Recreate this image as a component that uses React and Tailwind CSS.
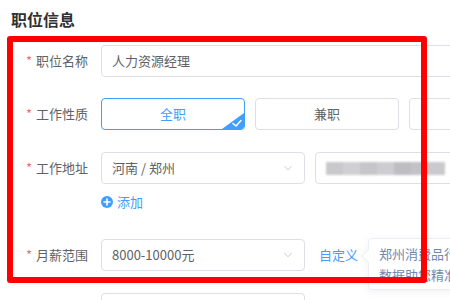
import { ChevronDown } from 'lucide-react';

const FONT = { fontFamily: '"Noto Sans CJK SC", "Noto Sans", sans-serif' };

function Label({ children }) {
  return (
    <div className="w-[90px] shrink-0 pr-[13px] text-right text-[13px] leading-8 text-[#606266]">
      <span className="mr-1 text-[#f56c6c]">*</span>
      {children}
    </div>
  );
}

function Select({ value }) {
  return (
    <div className="flex h-8 w-[204px] shrink-0 items-center justify-between rounded border border-[#dcdfe6] bg-white pl-[10px] pr-[9px] text-[13px] text-[#606266]">
      <span>{value}</span>
      <ChevronDown size={14} strokeWidth={1.5} className="text-[#c0c4cc]" />
    </div>
  );
}

function Blurred() {
  // masked address text
  const shades = ['#c9c9cd', '#d0d0d4', '#c6c6ca', '#cdcdd1', '#bdbdc2', '#c3c3c7', '#cacace'];
  return (
    <div className="flex h-[13px] blur-[1px]">
      {shades.map((c, i) => (
        <div key={i} className="h-full w-[17px]" style={{ background: c }} />
      ))}
    </div>
  );
}

export default function App() {
  return (
    <div className="relative h-[300px] w-[450px] overflow-hidden bg-white" style={FONT}>
      <div className="w-[700px] pl-[11px] pt-[9px]">
        <h2 className="text-[16px] font-bold leading-5 text-[#303133]">职位信息</h2>

        <div className="mt-[16px] flex flex-col">
          <div className="flex items-center">
            <Label>职位名称</Label>
            <div className="flex h-8 w-[460px] shrink-0 items-center rounded border border-[#dcdfe6] pl-[10px] text-[13px] text-[#606266]">
              人力资源经理
            </div>
          </div>

          <div className="mt-[21px] flex items-center">
            <Label>工作性质</Label>
            <div className="flex shrink-0 gap-[10px]">
              <div className="relative flex h-8 w-[144px] shrink-0 items-center justify-center overflow-hidden rounded border border-[#409eff] text-[13px] text-[#409eff]">
                全职
                <svg className="absolute bottom-0 right-0" width="22" height="16" viewBox="0 0 22 16">
                  <polygon points="22,0 22,16 0,16" fill="#409eff" />
                  <path d="M11 10.5 L14 13 L19 7.5" fill="none" stroke="#fff" strokeWidth="1.6" strokeLinecap="round" strokeLinejoin="round" />
                </svg>
              </div>
              <div className="flex h-8 w-[144px] shrink-0 items-center justify-center rounded border border-[#dcdfe6] text-[13px] text-[#606266]">
                兼职
              </div>
              <div className="flex h-8 w-[144px] shrink-0 items-center justify-center rounded border border-[#dcdfe6] text-[13px] text-[#606266]">
                实习
              </div>
            </div>
          </div>

          <div className="mt-[22px] flex items-center">
            <Label>工作地址</Label>
            <Select value="河南 / 郑州" />
            <div className="ml-[10px] flex h-8 w-[240px] shrink-0 items-center rounded border border-[#dcdfe6] pl-[10px]">
              <Blurred />
            </div>
          </div>

          <div className="flex h-9 items-center pl-[90px] text-[13px] text-[#409eff]">
            <svg width="12" height="12" viewBox="0 0 12 12" className="mr-[4px]">
              <circle cx="6" cy="6" r="6" fill="#409eff" />
              <path d="M6 3 V9 M3 6 H9" stroke="#fff" strokeWidth="1.6" strokeLinecap="round" />
            </svg>
            添加
          </div>

          <div className="mt-[19px] flex h-8 items-start">
            <Label>月薪范围</Label>
            <Select value="8000-10000元" />
            <span className="ml-[14px] shrink-0 whitespace-nowrap text-[13px] leading-8 text-[#409eff]">自定义</span>
            <div className="relative ml-[10px] -mt-px w-[200px] shrink-0 rounded border border-[#ebeef5] bg-white px-[10px] py-[4px] text-[13px] leading-[21px] text-[#7088b0] shadow-[0_2px_8px_rgba(0,0,0,0.06)]">
              <div className="absolute -left-[6px] top-[12px] h-[10px] w-[10px] rotate-45 border-b border-l border-[#ebeef5] bg-white" />
              <div className="whitespace-nowrap">郑州消费品行业月薪参考</div>
              <div className="whitespace-nowrap">数据助您精准定薪</div>
            </div>
          </div>

          <div className="mt-[22px] flex items-center">
            <div className="w-[90px] shrink-0" />
            <div className="h-8 w-[204px] shrink-0 rounded border border-[#dcdfe6]" />
          </div>
        </div>
      </div>

      <div className="pointer-events-none absolute left-[7px] top-[36px] h-[247px] w-[420px] rounded-[3px] border-[6px] border-[#ff0000]" />
    </div>
  );
}
